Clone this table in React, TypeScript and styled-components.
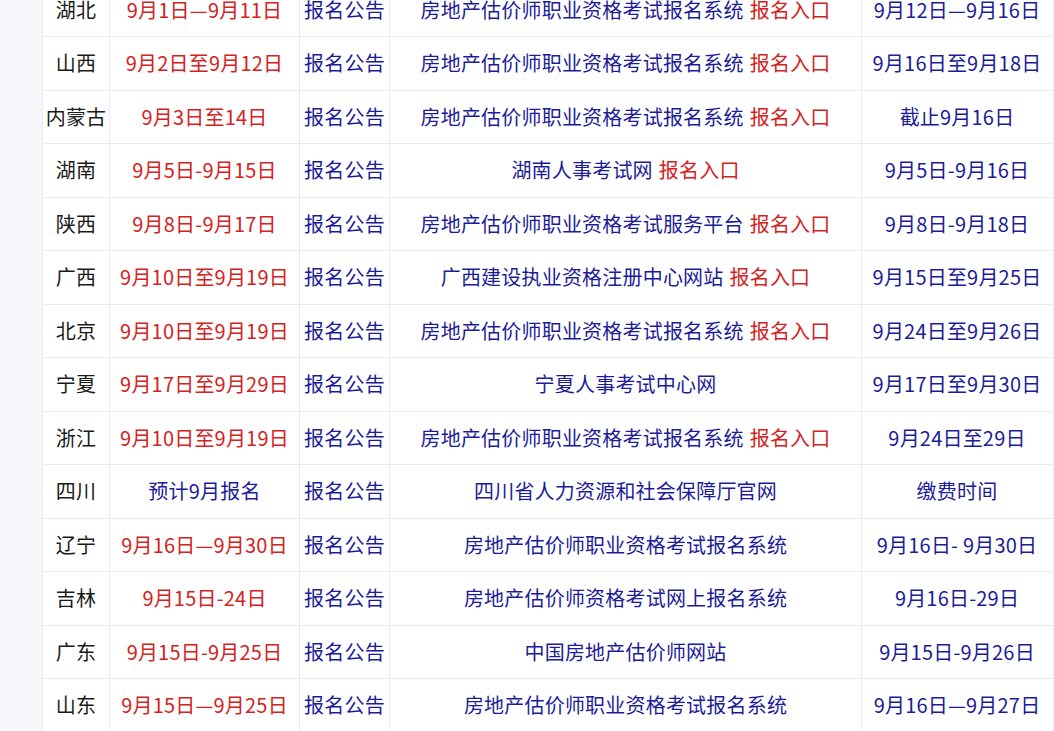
import styled, { createGlobalStyle } from 'styled-components';

const GlobalStyle = createGlobalStyle`
  html, body {
    margin: 0;
    padding: 0;
    background: #f4f6fa;
  }
  body {
    font-family: "Noto Sans CJK SC", "Noto Sans", sans-serif;
  }
`;

const Page = styled.div`
  height: 731px;
  overflow: hidden;
  padding-left: 42px;
  width: 1010px;
`;

const Table = styled.table`
  width: 1010px;
  table-layout: fixed;
  border-collapse: collapse;
  background: #fff;
  margin-top: -17.5px;
`;

const Col = styled.col<{ $w: number }>`
  width: ${({ $w }) => $w}px;
`;

const Row = styled.tr`
  height: 53.5px;
`;

const Cell = styled.td<{ $tone?: 'red' | 'blue' | 'black' }>`
  border: 1px solid #ececec;
  padding: 0;
  text-align: center;
  font-size: 20px;
  line-height: 24px;
  white-space: nowrap;
  letter-spacing: 0.2px;
  color: ${({ $tone }) =>
    $tone === 'red' ? '#d42222' : $tone === 'blue' ? '#1c1c98' : '#1a1a1a'};
`;

const Entry = styled.span`
  color: #d42222;
  margin-left: 6px;
`;

type Item = {
  province: string;
  apply: string;
  applyBlue?: boolean;
  site: string;
  entry?: boolean;
  pay: string;
};

const SYS = '房地产估价师职业资格考试报名系统';

const widths = [67, 190, 90, 472, 191];

const items: Item[] = [
  { province: '湖北', apply: '9月1日—9月11日', site: SYS, entry: true, pay: '9月12日—9月16日' },
  { province: '山西', apply: '9月2日至9月12日', site: SYS, entry: true, pay: '9月16日至9月18日' },
  { province: '内蒙古', apply: '9月3日至14日', site: SYS, entry: true, pay: '截止9月16日' },
  { province: '湖南', apply: '9月5日-9月15日', site: '湖南人事考试网', entry: true, pay: '9月5日-9月16日' },
  { province: '陕西', apply: '9月8日-9月17日', site: '房地产估价师职业资格考试服务平台', entry: true, pay: '9月8日-9月18日' },
  { province: '广西', apply: '9月10日至9月19日', site: '广西建设执业资格注册中心网站', entry: true, pay: '9月15日至9月25日' },
  { province: '北京', apply: '9月10日至9月19日', site: SYS, entry: true, pay: '9月24日至9月26日' },
  { province: '宁夏', apply: '9月17日至9月29日', site: '宁夏人事考试中心网', pay: '9月17日至9月30日' },
  { province: '浙江', apply: '9月10日至9月19日', site: SYS, entry: true, pay: '9月24日至29日' },
  { province: '四川', apply: '预计9月报名', applyBlue: true, site: '四川省人力资源和社会保障厅官网', pay: '缴费时间' },
  { province: '辽宁', apply: '9月16日—9月30日', site: SYS, pay: '9月16日- 9月30日' },
  { province: '吉林', apply: '9月15日-24日', site: '房地产估价师资格考试网上报名系统', pay: '9月16日-29日' },
  { province: '广东', apply: '9月15日-9月25日', site: '中国房地产估价师网站', pay: '9月15日-9月26日' },
  { province: '山东', apply: '9月15日—9月25日', site: SYS, pay: '9月16日—9月27日' },
];

export default function App() {
  return (
    <>
      <GlobalStyle />
      <Page>
        <Table>
          <colgroup>
            {widths.map((w, i) => (
              <Col key={i} $w={w} />
            ))}
          </colgroup>
          <tbody>
            {items.map((it) => (
              <Row key={it.province}>
                <Cell $tone="black">{it.province}</Cell>
                <Cell $tone={it.applyBlue ? 'blue' : 'red'}>{it.apply}</Cell>
                <Cell $tone="blue">报名公告</Cell>
                <Cell $tone="blue">
                  {it.site}
                  {it.entry && <Entry>报名入口</Entry>}
                </Cell>
                <Cell $tone="blue">{it.pay}</Cell>
              </Row>
            ))}
          </tbody>
        </Table>
      </Page>
    </>
  );
}
